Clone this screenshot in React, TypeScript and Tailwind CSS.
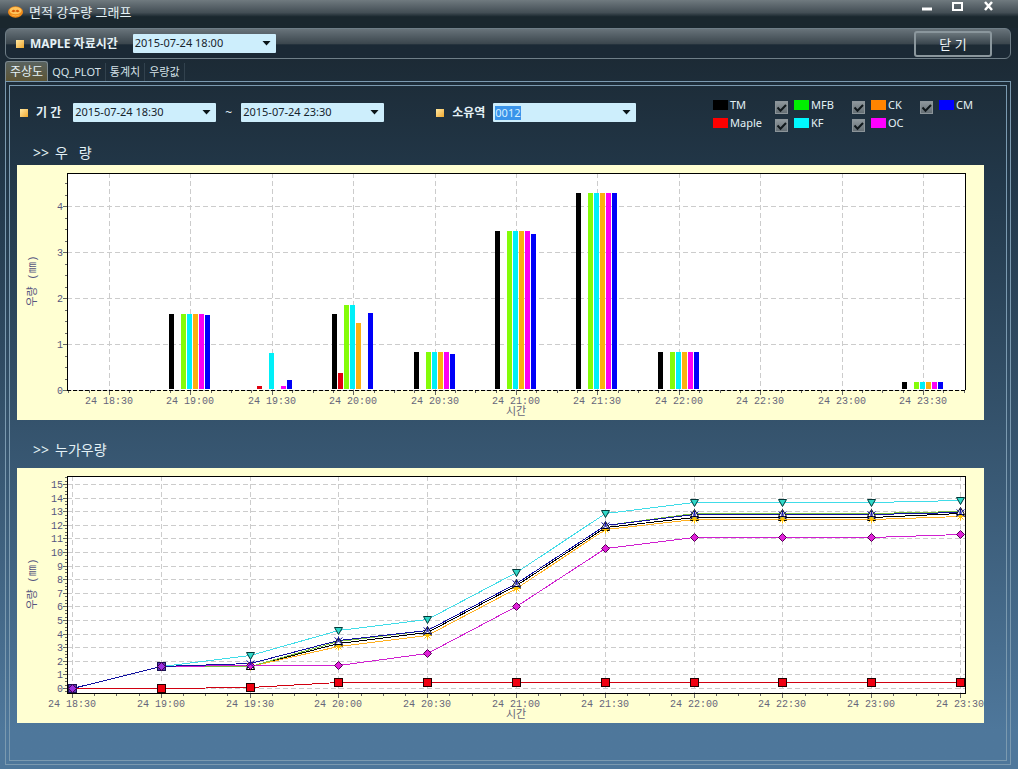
import { useState } from 'react';

const TIMES = ['24 18:30', '24 19:00', '24 19:30', '24 20:00', '24 20:30', '24 21:00', '24 21:30', '24 22:00', '24 22:30', '24 23:00', '24 23:30'];

const BAR_COLORS = ['#000000', '#e00010', '#84fc08', '#00f0f8', '#fcb010', '#fc00f4', '#0000f8'];

// Rainfall per half hour, ordered TM, Maple, MFB, KF, CK, OC, CM.
const RAIN: number[][] = [
  [0, 0, 0, 0, 0, 0, 0],
  [1.65, 0, 1.65, 1.65, 1.65, 1.65, 1.63],
  [0, 0.08, 0, 0.81, 0, 0.08, 0.22],
  [1.65, 0.37, 1.85, 1.85, 1.45, 0, 1.67],
  [0.82, 0, 0.82, 0.82, 0.82, 0.82, 0.78],
  [3.46, 0, 3.46, 3.46, 3.46, 3.46, 3.39],
  [4.28, 0, 4.28, 4.28, 4.28, 4.28, 4.28],
  [0.82, 0, 0.82, 0.82, 0.82, 0.82, 0.82],
  [0, 0, 0, 0, 0, 0, 0],
  [0, 0, 0, 0, 0, 0, 0],
  [0.17, 0, 0.17, 0.17, 0.17, 0.17, 0.17],
];

type Shape = 'square' | 'up' | 'down' | 'star' | 'diamond' | 'cross';

const LINES: { name: string; color: string; fill: string; shape: Shape; values: number[] }[] = [
  { name: 'TM', color: '#000000', fill: '#b0c060', shape: 'up', values: [0, 1.6, 1.62, 3.3, 4.1, 7.55, 11.85, 12.6, 12.6, 12.6, 12.85] },
  { name: 'Maple', color: '#d00010', fill: '#f00010', shape: 'square', values: [0, 0, 0.08, 0.44, 0.44, 0.44, 0.44, 0.44, 0.44, 0.44, 0.44] },
  { name: 'CK', color: '#ffb020', fill: '#ffc000', shape: 'star', values: [0, 1.6, 1.6, 3.1, 3.9, 7.35, 11.7, 12.45, 12.45, 12.45, 12.65] },
  { name: 'MFB', color: '#7cc040', fill: '#ffffff', shape: 'up', values: [0, 1.6, 1.65, 3.45, 4.25, 7.7, 12.0, 12.85, 12.85, 12.85, 13.0] },
  { name: 'KF', color: '#40dce8', fill: '#30d8c8', shape: 'down', values: [0, 1.6, 2.4, 4.25, 5.05, 8.5, 12.85, 13.65, 13.65, 13.65, 13.8] },
  { name: 'OC', color: '#d020d0', fill: '#e020d8', shape: 'diamond', values: [0, 1.6, 1.7, 1.7, 2.55, 6.0, 10.3, 11.1, 11.1, 11.1, 11.3] },
  { name: 'CM', color: '#1010a0', fill: '#1010a0', shape: 'cross', values: [0, 1.6, 1.85, 3.5, 4.3, 7.72, 11.98, 12.76, 12.76, 12.76, 12.93] },
];

function Marker({ shape, x, y, fill }: { shape: Shape; x: number; y: number; fill: string }) {
  switch (shape) {
    case 'square':
      return <rect x={x - 4} y={y - 4} width="8" height="8" fill={fill} stroke="#200000" />;
    case 'up':
      return <path d={`M${x} ${y - 4}l4 7h-8z`} fill={fill} stroke="#000" />;
    case 'down':
      return <path d={`M${x} ${y + 4}l-4 -7h8z`} fill={fill} stroke="#003838" />;
    case 'star':
      return <path d={`M${x - 4} ${y}h8M${x} ${y - 4}v8M${x - 3} ${y - 3}l6 6M${x + 3} ${y - 3}l-6 6`} stroke={fill} fill="none" />;
    case 'diamond':
      return <path d={`M${x} ${y - 4}l4 4l-4 4l-4 -4z`} fill={fill} stroke="#500050" />;
    default:
      return <path d={`M${x - 4} ${y - 3}l8 7M${x + 4} ${y - 3}l-8 7M${x} ${y - 4}v4`} stroke={fill} fill="none" />;
  }
}

const LEFT = 50;
const RIGHT = 948;
const TOP = 8;
const BOTTOM = 225;

interface AxesProps {
  centers: number[];
  yMax: number;
  yOf: (v: number) => number;
  minorY: number;
  minorX: number;
  dashedBase?: boolean;
}

function range(from: number, to: number, step: number) {
  const out: number[] = [];
  for (let v = from; v < to; v += step) out.push(v);
  return out;
}

function Axes({ centers, yMax, yOf, minorY, minorX, dashedBase }: AxesProps) {
  const ys = range(0, yMax + 1, 1);
  return (
    <>
      <rect x={LEFT} y={TOP} width={RIGHT - LEFT} height={BOTTOM - TOP} fill="#fff" />
      <g stroke="#cccccc" strokeDasharray="5 3" shapeRendering="crispEdges">
        {ys.map((v) => (
          <line key={v} x1={LEFT} x2={RIGHT} y1={yOf(v) + 0.5} y2={yOf(v) + 0.5} />
        ))}
        {centers.map((c) => (
          <line key={c} x1={c + 0.5} x2={c + 0.5} y1={TOP} y2={BOTTOM} />
        ))}
      </g>
      <g stroke="#666" shapeRendering="crispEdges">
        {ys.map((v) => (
          <line key={v} x1={LEFT - 4} x2={LEFT} y1={yOf(v) + 0.5} y2={yOf(v) + 0.5} />
        ))}
        {range(yOf(0) % minorY, BOTTOM, minorY)
          .filter((y) => y > TOP)
          .map((y) => (
            <line key={y} x1={LEFT - 2} x2={LEFT} y1={y + 0.5} y2={y + 0.5} />
          ))}
        {centers.map((c) => (
          <line key={c} x1={c + 0.5} x2={c + 0.5} y1={BOTTOM} y2={BOTTOM + 5} />
        ))}
        {range((centers[0] - LEFT) % minorX, RIGHT - LEFT, minorX).map((d) => (
          <line key={d} x1={d + LEFT + 0.5} x2={d + LEFT + 0.5} y1={BOTTOM} y2={BOTTOM + 3} />
        ))}
      </g>
      <g fill="none" stroke="#000" shapeRendering="crispEdges">
        <path d={`M${LEFT + 0.5} ${BOTTOM}V${TOP + 0.5}H${RIGHT + 0.5}V${BOTTOM}`} />
        <path d={`M${LEFT} ${BOTTOM + 0.5}H${RIGHT + 1}`} strokeDasharray={dashedBase ? '4 2' : undefined} />
      </g>
      <g className="font-['Liberation_Mono','Noto_Sans_CJK_KR',monospace] text-[10px]" fill="#66667a">
        {ys.map((v) => (
          <text key={v} x="46" y={yOf(v) + 4} textAnchor="end" fill="#555580">
            {v}
          </text>
        ))}
        {centers.map((c, i) => (
          <text key={c} x={c} y="239" textAnchor="middle">
            {TIMES[i]}
          </text>
        ))}
      </g>
      <g className="font-['Liberation_Mono','Noto_Sans_CJK_KR',monospace] text-[11px]" fill="#555580">
        <text x="499" y="250" textAnchor="middle" fill="#66667a">
          시간
        </text>
        <text transform="translate(19 116) rotate(-90)" textAnchor="middle">
          우량 (㎜)
        </text>
      </g>
    </>
  );
}

function RainChart() {
  const centers = TIMES.map((_, i) => Math.floor(92.5 + 81.4 * i));
  const yOf = (v: number) => Math.round(225 - v * 46);
  return (
    <svg viewBox="0 0 967 255" className="block h-auto w-full bg-[#ffffd2]" role="img" aria-label="우량">
      <Axes centers={centers} yMax={4} yOf={yOf} minorY={11.5} minorX={20.35} dashedBase />
      <g shapeRendering="crispEdges">
        {RAIN.map((row, i) =>
          row.map((v, k) =>
            v > 0 ? <rect key={`${i}-${k}`} x={centers[i] - 21 + k * 6} y={yOf(v)} width="5" height={224 - yOf(v)} fill={BAR_COLORS[k]} /> : null,
          ),
        )}
      </g>
    </svg>
  );
}

function TotalChart() {
  const centers = TIMES.map((_, i) => Math.floor(55.5 + 88.8 * i));
  const yOf = (v: number) => Math.round(220 - v * 13.6);
  return (
    <svg viewBox="0 0 967 255" className="block h-auto w-full bg-[#ffffd2]" role="img" aria-label="누가우량">
      <Axes centers={centers} yMax={15} yOf={yOf} minorY={3.4} minorX={22.2} />
      <g shapeRendering="crispEdges" fill="none">
        {LINES.map((l) => (
          <polyline key={l.name} stroke={l.color} points={l.values.map((v, i) => `${centers[i] + 0.5},${yOf(v) + 0.5}`).join(' ')} />
        ))}
      </g>
      {LINES.map((l) => (
        <g key={l.name}>
          {l.values.map((v, i) => (
            <Marker key={i} shape={l.shape} x={centers[i] + 0.5} y={yOf(v) + 0.5} fill={l.fill} />
          ))}
        </g>
      ))}
      {[0, 1].map((i) => {
        const y = yOf(LINES[6].values[i]) + 0.5;
        return (
          <g key={i}>
            <rect x={centers[i] - 3.5} y={y - 4} width="8" height="8" fill="#5a30b8" stroke="#181050" />
            <Marker shape="diamond" x={centers[i] + 0.5} y={y} fill="#9a30e0" />
          </g>
        );
      })}
    </svg>
  );
}

function Bullet() {
  return <span aria-hidden="true" className="size-2 shrink-0 bg-linear-to-br from-[#ffe9a0] to-[#f0a820]" />;
}

function Arrow() {
  return (
    <svg viewBox="0 0 9 5" className="h-[5px] w-[9px]" aria-hidden="true">
      <path d="M0.500 0h8L4.500 4.500z" fill="#0a1418" />
    </svg>
  );
}

function DateSelect({ id, label, value }: { id: string; label: string; value: string }) {
  return (
    <div className="grid w-[143px] items-center">
      <select
        id={id}
        aria-label={label}
        defaultValue={value}
        className="col-start-1 row-start-1 h-[19px] w-full appearance-none rounded-[1px] bg-[#cdeefc] pr-5 pb-0.5 pl-0.5 text-[11px] leading-4 text-[#16242c]"
      >
        <option>{value}</option>
      </select>
      <span className="pointer-events-none col-start-1 row-start-1 mr-[5px] justify-self-end">
        <Arrow />
      </span>
    </div>
  );
}

function LegendItem({ name, swatch, checkable }: { name: string; swatch: string; checkable?: boolean }) {
  const [on, setOn] = useState(true);
  const body = (
    <>
      <span className={`h-[10px] w-[15px] ${swatch}`} />
      <span>{name}</span>
    </>
  );
  if (!checkable) return <div className="flex h-[18px] items-center gap-0.5">{body}</div>;
  return (
    <label className="flex h-[18px] items-center gap-0.5">
      <span className="mt-1 mr-1 grid size-[13px]">
        <input
          type="checkbox"
          checked={on}
          onChange={() => setOn(!on)}
          className="col-start-1 row-start-1 size-[13px] appearance-none border border-[#8b9499] bg-linear-to-b from-[#8e979c] to-[#646e74]"
        />
        {on && (
          <svg viewBox="0 0 13 13" className="pointer-events-none col-start-1 row-start-1 size-[13px]" aria-hidden="true">
            <path d="M2.5 6.5l3 3.2L11 4" fill="none" stroke="#10181c" strokeWidth="2" />
          </svg>
        )}
      </span>
      {body}
    </label>
  );
}

const TABS = ['주상도', 'QQ_PLOT', '통계치', '우량값'];

export default function App() {
  const [tab, setTab] = useState(0);
  return (
    <div className="flex min-h-screen flex-col bg-linear-to-b from-[#1b2832] from-5% via-[#22384a] via-24% to-[#4e779b] to-95% font-['Noto_Sans','Noto_Sans_CJK_KR',sans-serif] text-[#e4f1f6]">
      <header className="flex h-7 shrink-0 items-start justify-between bg-linear-to-b from-[#707a7f] via-[#434e55] via-45% to-[#1a272e] to-60% pr-[23px] pl-2">
        <div className="flex h-6 items-center gap-1.5">
          <svg viewBox="0 0 15 12" className="h-3 w-[15px]" aria-hidden="true">
            <ellipse cx="7.5" cy="6" rx="7.5" ry="5.8" fill="#f08a18" />
            <ellipse cx="7.5" cy="4.6" rx="6" ry="3.6" fill="#ffc45c" />
            <path d="M3.500 5.500q1.500-3 4-0.500q2.500-2.500 4 0.500l-2 0.800l-2-1l-2 1z" fill="#d85a08" />
            <path d="M3.500 9q4 1.800 8 0" stroke="#ffb040" fill="none" />
          </svg>
          <h1 className="text-[13px] leading-5">면적 강우량 그래프</h1>
        </div>
        <div className="flex gap-[19px] pt-px">
          <button type="button" aria-label="최소화" className="size-3">
            <svg viewBox="0 0 12 12" className="size-3">
              <path d="M1 8h10" stroke="#fff" strokeWidth="3" />
            </svg>
          </button>
          <button type="button" aria-label="최대화" className="size-3">
            <svg viewBox="0 0 12 12" className="size-3">
              <path d="M1 2h9v7h-9z" fill="none" stroke="#fff" strokeWidth="2" />
            </svg>
          </button>
          <button type="button" aria-label="창 닫기" className="size-3">
            <svg viewBox="0 0 12 12" className="size-3">
              <path d="M2 1l7 8M9 1l-7 8" stroke="#fff" strokeWidth="2.500" />
            </svg>
          </button>
        </div>
      </header>

      <div className="mr-[7px] ml-[5px] flex h-[31px] shrink-0 items-center rounded-md border border-[#6f7e87] bg-linear-to-b from-[#68737a] via-[#3c474e] via-50% to-[#1b2935] to-55% pr-[18px] pl-2.5">
        <Bullet />
        <label htmlFor="base-time" className="mr-[15px] ml-1.5 text-xs font-bold">
          MAPLE 자료시간
        </label>
        <DateSelect id="base-time" label="MAPLE 자료시간" value="2015-07-24 18:00" />
        <button
          type="button"
          className="ml-auto h-[26px] w-[78px] rounded-[3px] border-2 border-[#8b979d] bg-linear-to-b from-[#6b767c] via-[#3a464e] via-50% to-[#1d2b35] to-55% text-[13px] leading-5 text-[#f0f7fa]"
        >
          닫 기
        </button>
      </div>

      <div role="tablist" className="mt-0.5 flex h-5 shrink-0 items-stretch pl-px text-xs">
        {TABS.map((t, i) => (
          <button
            key={t}
            type="button"
            role="tab"
            aria-selected={tab === i}
            onClick={() => setTab(i)}
            className={
              tab === i
                ? 'ml-1 rounded-t-[3px] border border-b-0 border-[#7d8a90] bg-linear-to-b from-[#59635f] to-[#5c5434] px-1 leading-4'
                : 'mt-0.5 border-r border-[#32424e] px-1 text-[11px] leading-4 text-[#d5e2e8]'
            }
          >
            {t}
          </button>
        ))}
      </div>

      <main className="mr-[7px] mb-1 ml-[5px] flex grow border border-[#7b9ab0] p-[3px]">
        <div className="grow border border-[#7b9ab0] pt-2.5 pr-[22px] pl-[7px]">
          <div className="flex items-start justify-between">
            <div className="flex items-center pt-[7px] pl-[3px] text-xs">
              <Bullet />
              <label htmlFor="from-time" className="mr-3 ml-2 font-bold">
                기 간
              </label>
              <DateSelect id="from-time" label="기간 시작" value="2015-07-24 18:30" />
              <span className="w-[25px] text-center">~</span>
              <DateSelect id="to-time" label="기간 끝" value="2015-07-24 23:30" />
              <span className="ml-[52px] flex">
                <Bullet />
              </span>
              <label htmlFor="basin" className="mr-2 ml-2 font-bold">
                소유역
              </label>
              <div className="flex h-[19px] w-[143px] items-center justify-between rounded-[1px] bg-[#cdeefc] pr-[5px] pl-0.5">
                <input id="basin" defaultValue="0012" className="h-[14px] w-[26px] bg-[#3a94ea] text-[11px] leading-[14px] text-[#d8f0ff]" />
                <button type="button" aria-label="소유역 목록">
                  <Arrow />
                </button>
              </div>
            </div>
            <div className="grid grid-cols-[62px_77px_68px_64px] text-[11px] leading-4">
              <LegendItem name="TM" swatch="bg-black" />
              <LegendItem name="MFB" swatch="bg-[#00f000]" checkable />
              <LegendItem name="CK" swatch="bg-[#ff8400]" checkable />
              <LegendItem name="CM" swatch="bg-[#0000ff]" checkable />
              <LegendItem name="Maple" swatch="bg-[#ff0000]" />
              <LegendItem name="KF" swatch="bg-[#00f8ff]" checkable />
              <LegendItem name="OC" swatch="bg-[#ff00ff]" checkable />
            </div>
          </div>

          <section>
            <h2 className="mt-[9px] flex h-6 gap-1.5 pl-4 text-[14px] leading-6">
              <span>&gt;&gt;</span>
              <span className="whitespace-pre">{'우   량'}</span>
            </h2>
            <RainChart />
          </section>
          <section>
            <h2 className="mt-[18px] mb-1.5 flex h-6 gap-1.5 pl-4 text-[14px] leading-6">
              <span>&gt;&gt;</span>
              <span>누가우량</span>
            </h2>
            <TotalChart />
          </section>
        </div>
      </main>
    </div>
  );
}
